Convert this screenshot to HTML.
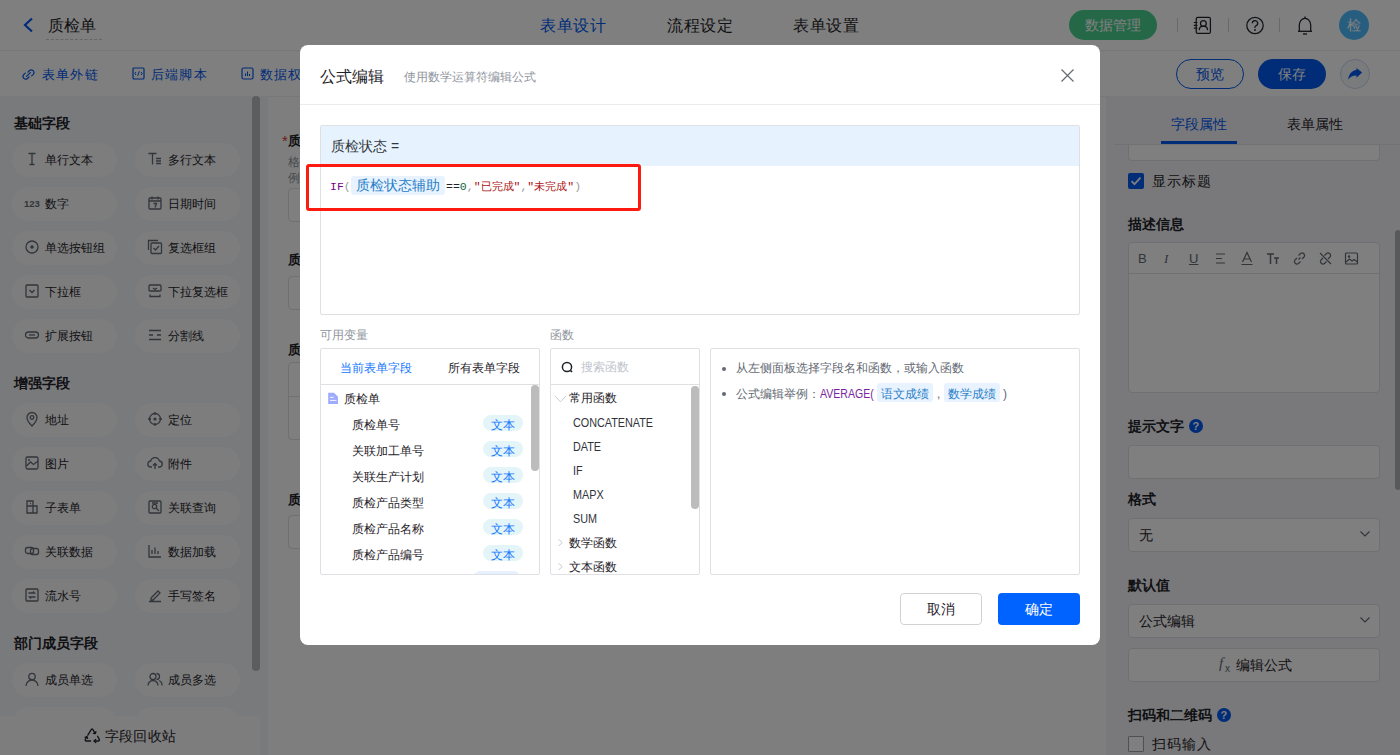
<!DOCTYPE html>
<html><head><meta charset="utf-8">
<style>
*{box-sizing:border-box;margin:0;padding:0}
html,body{width:1400px;height:755px;overflow:hidden;background:#fff;font-family:"Liberation Sans",sans-serif;color:#1f2329}
.a{position:absolute}
.t{position:absolute;white-space:nowrap;line-height:1}
#hdr{left:0;top:0;width:1400px;height:51px;background:#fff;border-bottom:1px solid #eceef1}
#sub{left:0;top:51px;width:1400px;height:45px;background:#fff}
#lp{left:0;top:96px;width:268px;height:659px;background:#f3f4f7}
#cv{left:268px;top:96px;width:838px;height:659px;background:#fcfcfc}
#rp{left:1106px;top:96px;width:294px;height:659px;background:#f2f3f6}
.sec{position:absolute;font-size:14px;font-weight:bold;color:#1f2329;line-height:1;white-space:nowrap}
.pill{position:absolute;width:105px;height:34px;border-radius:17px;background:#fafbfc}
.pill span{position:absolute;left:33px;top:11px;font-size:12px;line-height:12px;color:#1f2329;white-space:nowrap}
.pill svg{position:absolute;left:12px;top:8px}
#mask{left:0;top:0;width:1400px;height:755px;background:rgba(0,0,0,0.5)}
#modal{left:300px;top:45px;width:800px;height:600px;background:#fff;border-radius:8px}
.box{position:absolute;border:1px solid #dee0e3;border-radius:2px;background:#fff}
.tag{position:absolute;height:16px;padding:0 7px;border-radius:8px;background:#e6f4ff;color:#1677ff;font-size:12px;line-height:16px}
.lbl{position:absolute;font-size:13px;font-weight:bold;color:#1f2329;line-height:1;white-space:nowrap}
.inp{position:absolute;left:23px;width:252px;height:34px;border:1px solid #dee0e3;border-radius:4px;background:#fff}
</style></head><body>
<!-- header -->
<div id="hdr" class="a">
  <svg class="a" style="left:22px;top:17px" width="12" height="16" viewBox="0 0 12 16"><path d="M10 1.5 L3 8 L10 14.5" fill="none" stroke="#0058f0" stroke-width="2.2"/></svg>
  <div class="t" style="left:48px;top:18px;font-size:16px;color:#1f2329">质检单</div>
  <div class="a" style="left:46px;top:39px;width:56px;border-top:1px dashed #c9ccd2"></div>
  <div class="t" style="left:540px;top:18px;font-size:16px;color:#0058f0;letter-spacing:0.7px">表单设计</div>
  <div class="t" style="left:667px;top:18px;font-size:16px;color:#1f2329;letter-spacing:0.7px">流程设定</div>
  <div class="t" style="left:793px;top:18px;font-size:16px;color:#1f2329;letter-spacing:0.7px">表单设置</div>
  <div class="a" style="left:1069px;top:10px;width:88px;height:30px;border-radius:15px;background:#4bd08f"></div>
  <div class="t" style="left:1085px;top:18px;font-size:14px;color:#fff">数据管理</div>
  <div class="a" style="left:1177px;top:18px;width:1px;height:14px;background:#d0d3d8"></div>
  <div class="a" style="left:1228px;top:18px;width:1px;height:14px;background:#d0d3d8"></div>
  <div class="a" style="left:1279px;top:18px;width:1px;height:14px;background:#d0d3d8"></div>
  <svg class="a" style="left:1190px;top:14px" width="25" height="22" viewBox="0 0 25 22"><rect x="6.2" y="3.4" width="14.2" height="16" rx="1.5" fill="none" stroke="#1f2329" stroke-width="1.25"/><path d="M3.8 8.5h3.6M3.8 11.3h3.6M3.8 14.1h3.6" stroke="#1f2329" stroke-width="1.2"/><circle cx="13.4" cy="9.4" r="2.9" fill="none" stroke="#1f2329" stroke-width="1.25"/><path d="M9.2 16.2C9.2 13.6 11 12 13.4 12S17.6 13.6 17.6 16.2" fill="none" stroke="#1f2329" stroke-width="1.25"/></svg>
  <svg class="a" style="left:1245px;top:16px" width="20" height="19" viewBox="0 0 20 19"><circle cx="10" cy="9.5" r="8.2" fill="none" stroke="#1f2329" stroke-width="1.25"/><path d="M7.3 7.3a2.7 2.7 0 1 1 3.6 2.5c-.7.3-.9.8-.9 1.6v.6" fill="none" stroke="#1f2329" stroke-width="1.25"/><circle cx="10" cy="14" r=".9" fill="#1f2329"/></svg>
  <svg class="a" style="left:1295px;top:14px" width="20" height="22" viewBox="0 0 20 22"><path d="M10 2.6V4.3" stroke="#1f2329" stroke-width="1.3"/><path d="M4.3 17.3V11A5.7 6.6 0 0 1 15.7 11V17.3" fill="none" stroke="#1f2329" stroke-width="1.25"/><path d="M3 17.3H17" stroke="#1f2329" stroke-width="1.3"/><path d="M8 20H12" stroke="#1f2329" stroke-width="1.3"/></svg>
  <div class="a" style="left:1339px;top:10px;width:30px;height:30px;border-radius:50%;background:#4fbdff"></div>
  <div class="t" style="left:1347px;top:18px;font-size:14px;color:#fff">检</div>
</div>
<div id="sub" class="a">
  <svg class="a" style="left:22px;top:16.5px" width="13" height="13" viewBox="0 0 13 13"><path d="M5.9 4.1L7.5 2.5A2.7 2.7 0 0 1 11.3 6.3L9.7 7.9M7.1 8.9L5.5 10.5A2.7 2.7 0 0 1 1.7 6.7L3.3 5.1M4.6 8.4L8.4 4.6" fill="none" stroke="#0058f0" stroke-width="1.2" stroke-linecap="round"/></svg>
  <div class="t" style="left:42px;top:17px;font-size:13px;color:#0058f0;letter-spacing:1.2px">表单外链</div>
  <svg class="a" style="left:132px;top:16px" width="13" height="13" viewBox="0 0 13 13"><rect x="1" y="1" width="11" height="11" rx="1" fill="none" stroke="#0058f0" stroke-width="1.2"/><path d="M4 5L2.8 6.5 4 8M9 5l1.2 1.5L9 8M7.3 4.2L5.7 8.8" fill="none" stroke="#0058f0" stroke-width="1"/></svg>
  <div class="t" style="left:151px;top:17px;font-size:13px;color:#0058f0;letter-spacing:1.2px">后端脚本</div>
  <svg class="a" style="left:241px;top:16px" width="13" height="13" viewBox="0 0 13 13"><rect x="1" y="1" width="11" height="11" rx="1.5" fill="none" stroke="#0058f0" stroke-width="1.2"/><path d="M4.5 9V6.5M6.5 9V4.5M8.5 9V7" stroke="#0058f0" stroke-width="1.1"/></svg>
  <div class="t" style="left:260px;top:17px;font-size:13px;color:#0058f0;letter-spacing:1.2px">数据权限</div>
  <div class="a" style="left:1176px;top:8px;width:68px;height:30px;border-radius:15px;border:1px solid #0058f0;background:#fff"></div>
  <div class="t" style="left:1196px;top:16px;font-size:14px;color:#0058f0">预览</div>
  <div class="a" style="left:1258px;top:8px;width:68px;height:30px;border-radius:15px;background:#0058f0"></div>
  <div class="t" style="left:1278px;top:16px;font-size:14px;color:#fff">保存</div>
  <div class="a" style="left:1340px;top:8px;width:30px;height:30px;border-radius:50%;border:1px solid #c8d5ee;background:#f5f7fb"></div>
  <svg class="a" style="left:1347px;top:15px" width="17" height="16" viewBox="0 0 17 16"><path d="M9.5 1.9L15.1 6.6L9.5 11.8V9.6C5.8 9.5 3.3 10.8 1.2 13.8C1.6 8.2 4.6 4.6 9.5 4Z" fill="#0058f0"/></svg>
</div>
<div id="lp" class="a"><div class="sec" style="left:14px;top:20px">基础字段</div><div class="pill" style="left:12px;top:47px"><svg width="16" height="16" viewBox="0 0 16 16"><path d="M4.5 2.5h7M8 2.5v11M5.5 13.5h5" stroke="#646a73" fill="none" stroke-width="1.3"/></svg><span>单行文本</span></div><div class="pill" style="left:135px;top:47px"><svg width="16" height="16" viewBox="0 0 16 16"><path d="M1.5 2.5h8M5.5 2.5v11M9 7.5h5M9 10h5M9 12.5h5" stroke="#646a73" fill="none" stroke-width="1.3"/></svg><span>多行文本</span></div><div class="pill" style="left:12px;top:91px"><svg width="18" height="16" viewBox="0 0 18 16"><text x="0" y="11.5" font-family="Liberation Sans" font-weight="bold" font-size="9.5" fill="#646a73">123</text></svg><span>数字</span></div><div class="pill" style="left:135px;top:91px"><svg width="16" height="16" viewBox="0 0 16 16"><rect x="2" y="3" width="12" height="11" rx="1" stroke="#646a73" fill="none" stroke-width="1.3"/><path d="M2 6h12M5 1.5v3M11 1.5v3M6.5 8.5h3l-1.5 4" stroke="#646a73" fill="none" stroke-width="1.3"/></svg><span>日期时间</span></div><div class="pill" style="left:12px;top:135px"><svg width="16" height="16" viewBox="0 0 16 16"><circle cx="8" cy="8" r="6" stroke="#646a73" fill="none" stroke-width="1.3"/><circle cx="8" cy="8" r="1.8" fill="#646a73"/></svg><span>单选按钮组</span></div><div class="pill" style="left:135px;top:135px"><svg width="16" height="16" viewBox="0 0 16 16"><path d="M1.5 11V1.5H11" stroke="#646a73" fill="none" stroke-width="1.3"/><rect x="4" y="4" width="10.5" height="10.5" rx="1" stroke="#646a73" fill="none" stroke-width="1.3"/><path d="M6.5 9l2 2 3.5-4" stroke="#646a73" fill="none" stroke-width="1.3"/></svg><span>复选框组</span></div><div class="pill" style="left:12px;top:179px"><svg width="16" height="16" viewBox="0 0 16 16"><rect x="2" y="2" width="12" height="12" rx="1" stroke="#646a73" fill="none" stroke-width="1.3"/><path d="M5.5 7l2.5 2.5L10.5 7" stroke="#646a73" fill="none" stroke-width="1.3"/></svg><span>下拉框</span></div><div class="pill" style="left:135px;top:179px"><svg width="16" height="16" viewBox="0 0 16 16"><rect x="2" y="2" width="12" height="6" rx="1" stroke="#646a73" fill="none" stroke-width="1.3"/><path d="M3 11.5v2h10v-2M6 5l2 1.5L10 5" stroke="#646a73" fill="none" stroke-width="1.3"/></svg><span>下拉复选框</span></div><div class="pill" style="left:12px;top:223px"><svg width="16" height="16" viewBox="0 0 16 16"><rect x="1.5" y="5" width="13" height="6" rx="3" stroke="#646a73" fill="none" stroke-width="1.3"/><path d="M5 8h6" stroke="#646a73" fill="none" stroke-width="1.3"/></svg><span>扩展按钮</span></div><div class="pill" style="left:135px;top:223px"><svg width="16" height="16" viewBox="0 0 16 16"><path d="M2 3.5h12M2 8h4M10 8h4M2 12.5h12" stroke="#646a73" fill="none" stroke-width="1.3"/></svg><span>分割线</span></div><div class="sec" style="left:14px;top:280px">增强字段</div><div class="pill" style="left:12px;top:307px"><svg width="16" height="16" viewBox="0 0 16 16"><path d="M8 15s-5-5-5-8.5a5 5 0 0 1 10 0C13 10 8 15 8 15z" stroke="#646a73" fill="none" stroke-width="1.3"/><circle cx="8" cy="6.5" r="1.8" stroke="#646a73" fill="none" stroke-width="1.3"/></svg><span>地址</span></div><div class="pill" style="left:135px;top:307px"><svg width="16" height="16" viewBox="0 0 16 16"><circle cx="8" cy="8" r="5.5" stroke="#646a73" fill="none" stroke-width="1.3"/><circle cx="8" cy="8" r="1.6" fill="#646a73"/><path d="M8 1v3M8 12v3M1 8h3M12 8h3" stroke="#646a73" fill="none" stroke-width="1.3"/></svg><span>定位</span></div><div class="pill" style="left:12px;top:351px"><svg width="16" height="16" viewBox="0 0 16 16"><rect x="2" y="2" width="12" height="12" rx="1.5" stroke="#646a73" fill="none" stroke-width="1.3"/><path d="M2.5 11l4-4 3 2.5L14 6" stroke="#646a73" fill="none" stroke-width="1.3"/><circle cx="5" cy="5" r="1" fill="#646a73"/></svg><span>图片</span></div><div class="pill" style="left:135px;top:351px"><svg width="16" height="16" viewBox="0 0 16 16"><path d="M5 12H4a3 3 0 0 1-.3-6A4.5 4.5 0 0 1 12.4 6 3 3 0 0 1 12 12h-1" stroke="#646a73" fill="none" stroke-width="1.3"/><path d="M8 14V8.5M6 10.5l2-2 2 2" stroke="#646a73" fill="none" stroke-width="1.3"/></svg><span>附件</span></div><div class="pill" style="left:12px;top:395px"><svg width="16" height="16" viewBox="0 0 16 16"><path d="M3 2h6v12H3zM3 7h10v7H9" stroke="#646a73" fill="none" stroke-width="1.3"/><path d="M6 4.5h1" stroke="#646a73" fill="none" stroke-width="1.3"/></svg><span>子表单</span></div><div class="pill" style="left:135px;top:395px"><svg width="16" height="16" viewBox="0 0 16 16"><rect x="2" y="2" width="12" height="12" rx="1" stroke="#646a73" fill="none" stroke-width="1.3"/><circle cx="7.5" cy="7.5" r="2.2" stroke="#646a73" fill="none" stroke-width="1.3"/><path d="M9 9l3 3M5 4h6" stroke="#646a73" fill="none" stroke-width="1.3"/></svg><span>关联查询</span></div><div class="pill" style="left:12px;top:439px"><svg width="16" height="16" viewBox="0 0 16 16"><rect x="1.5" y="4.5" width="8" height="6" rx="2" stroke="#646a73" fill="none" stroke-width="1.3"/><rect x="6.5" y="5.5" width="8" height="6" rx="2" stroke="#646a73" fill="none" stroke-width="1.3"/></svg><span>关联数据</span></div><div class="pill" style="left:135px;top:439px"><svg width="16" height="16" viewBox="0 0 16 16"><path d="M2 2v12h12M5 11V7M8 11V4.5M11 11V8" stroke="#646a73" fill="none" stroke-width="1.3"/></svg><span>数据加载</span></div><div class="pill" style="left:12px;top:483px"><svg width="16" height="16" viewBox="0 0 16 16"><rect x="2" y="2" width="12" height="12" rx="1" stroke="#646a73" fill="none" stroke-width="1.3"/><path d="M4.5 6h6l-1.5-1.5M11.5 10h-6l1.5 1.5" stroke="#646a73" fill="none" stroke-width="1.3"/></svg><span>流水号</span></div><div class="pill" style="left:135px;top:483px"><svg width="16" height="16" viewBox="0 0 16 16"><path d="M4 11l7-7 2 2-7 7H4zM2 14.5h12" stroke="#646a73" fill="none" stroke-width="1.3"/></svg><span>手写签名</span></div><div class="sec" style="left:14px;top:540px">部门成员字段</div><div class="pill" style="left:12px;top:567px"><svg width="16" height="16" viewBox="0 0 16 16"><circle cx="8" cy="5.5" r="3.2" stroke="#646a73" fill="none" stroke-width="1.3"/><path d="M2 15a6 6 0 0 1 12 0" stroke="#646a73" fill="none" stroke-width="1.3"/></svg><span>成员单选</span></div><div class="pill" style="left:135px;top:567px"><svg width="16" height="16" viewBox="0 0 16 16"><circle cx="6" cy="5.5" r="3" stroke="#646a73" fill="none" stroke-width="1.3"/><path d="M1 14.5a5 5 0 0 1 10 0M9.5 2.5a3 3 0 0 1 0 6M12 9.5a5 5 0 0 1 3 5" stroke="#646a73" fill="none" stroke-width="1.3"/></svg><span>成员多选</span></div><div class="pill" style="left:12px;top:611px"><svg width="16" height="16" viewBox="0 0 16 16"><circle cx="8" cy="5.5" r="3.2" stroke="#646a73" fill="none" stroke-width="1.3"/><path d="M2 15a6 6 0 0 1 12 0" stroke="#646a73" fill="none" stroke-width="1.3"/></svg><span>部门单选</span></div><div class="pill" style="left:135px;top:611px"><svg width="16" height="16" viewBox="0 0 16 16"><circle cx="6" cy="5.5" r="3" stroke="#646a73" fill="none" stroke-width="1.3"/><path d="M1 14.5a5 5 0 0 1 10 0M9.5 2.5a3 3 0 0 1 0 6M12 9.5a5 5 0 0 1 3 5" stroke="#646a73" fill="none" stroke-width="1.3"/></svg><span>部门多选</span></div><div class="a" style="left:252px;top:0;width:8px;height:575px;border-radius:4px;background:#b9bbbe"></div><div class="a" style="left:0;top:620px;width:260px;height:39px;background:#fafafa;border-top:0px solid #eceef1"></div><svg class="a" style="left:84px;top:632px" width="17" height="16" viewBox="0 0 17 16"><g fill="none" stroke="#1f2329" stroke-width="1.3" stroke-linejoin="round" stroke-linecap="round"><path d="M3.8 7.2L7.6 1.2Q8.1 0.5 8.6 1.2L11.2 5.3"/><path d="M9.4 5.3L11.3 5.6L11.9 3.7"/><path d="M13.6 8.3L15.3 11.4Q15.7 12.9 14.2 13H10.2"/><path d="M11.8 11.4L10.1 13L11.8 14.6"/><path d="M6.6 13H2.4Q0.9 12.9 1.3 11.4L2.8 8.7"/><path d="M1.2 9.4L2.9 8.6L3.7 10.4"/></g></svg><div class="t" style="left:105px;top:633px;font-size:14px;color:#1f2329;letter-spacing:0.2px">字段回收站</div></div>
<div id="cv" class="a"><div class="a" style="left:0;top:0;width:838px;height:1px;background:#f0f1f3"></div><div class="t" style="left:14px;top:36.5px;font-size:15px;color:#d83931">*</div>
<div class="lbl" style="left:20px;top:38px">质检状态</div>
<div class="t" style="left:20px;top:60px;font-size:12px;color:#8f959e">格式说明</div>
<div class="t" style="left:20px;top:76px;font-size:12px;color:#8f959e">例如</div>
<div class="a" style="left:20px;top:92px;width:500px;height:34px;border:1px solid #dee0e3;border-radius:4px;background:#fff"></div>
<div class="lbl" style="left:20px;top:157px">质检结果</div>
<div class="a" style="left:20px;top:180px;width:500px;height:34px;border:1px solid #dee0e3;border-radius:4px;background:#fff"></div>
<div class="lbl" style="left:20px;top:247px">质检明细</div>
<div class="a" style="left:20px;top:266px;width:500px;height:78px;border:1px solid #dee0e3;border-radius:4px;background:#fff"></div>
<div class="a" style="left:20px;top:300px;width:500px;border-top:1px solid #dee0e3"></div>
<div class="lbl" style="left:20px;top:397px">质检日期</div>
<div class="a" style="left:20px;top:419px;width:500px;height:34px;border:1px solid #dee0e3;border-radius:4px;background:#fff"></div>
</div>
<div id="rp" class="a"><div class="a" style="left:22px;top:36px;width:252px;height:29px;border:1px solid #dee0e3;border-top:none;border-radius:0 0 4px 4px;background:#fff"></div>
<div class="a" style="left:0;top:0;width:294px;height:48px;background:#f2f3f6"></div><div class="t" style="left:65px;top:21px;font-size:14px;color:#0058f0">字段属性</div>
<div class="t" style="left:181px;top:21px;font-size:14px;color:#1f2329">表单属性</div>
<div class="a" style="left:8px;top:48px;width:286px;border-top:1px solid #e3e5e8"></div>
<div class="a" style="left:55px;top:45px;width:76px;height:3px;background:#0058f0"></div>
<div class="a" style="left:22px;top:77px;width:16px;height:16px;border-radius:2px;background:#0058f0"></div>
<svg class="a" style="left:22px;top:77px" width="16" height="16" viewBox="0 0 16 16"><path d="M3.5 8.2l3 3 6-6.5" fill="none" stroke="#fff" stroke-width="1.8"/></svg>
<div class="t" style="left:46px;top:78px;font-size:14px;color:#1f2329;letter-spacing:0.9px">显示标题</div>
<div class="lbl" style="left:22px;top:121px;font-size:14px">描述信息</div>
<div class="a" style="left:22px;top:146px;width:252px;height:151px;border:1px solid #dee0e3;border-radius:4px;background:#fff"></div>
<div class="a" style="left:22px;top:177px;width:252px;border-top:1px solid #dee0e3"></div>
<div class="t" style="left:32px;top:156px;font-size:13px;color:#646a73">B</div>
<div class="t" style="left:58px;top:156px;font-size:13px;color:#646a73;font-style:italic;font-family:'Liberation Serif'">I</div>
<div class="t" style="left:83px;top:156px;font-size:13px;color:#646a73;text-decoration:underline">U</div>
<svg class="a" style="left:108px;top:156px" width="14" height="13" viewBox="0 0 14 13"><path d="M2 2h9M2 6.5h6M2 11h9" stroke="#646a73" stroke-width="1.2"/></svg>
<svg class="a" style="left:134px;top:155px" width="14" height="15" viewBox="0 0 14 15"><path d="M2.5 11L7 1.5 11.5 11M4 8h6M1.5 13.5h11" fill="none" stroke="#646a73" stroke-width="1.2"/></svg>
<svg class="a" style="left:160px;top:156px" width="14" height="13" viewBox="0 0 14 13"><path d="M1 2h7M4.5 2v10M8 6h5M10.5 6v6" fill="none" stroke="#646a73" stroke-width="1.5"/></svg>
<svg class="a" style="left:186px;top:155px" width="15" height="15" viewBox="0 0 15 15"><path d="M6.5 8.5l2-2M5 7l-2 2a2.5 2.5 0 0 0 3.5 3.5l2-2M10 8l2-2a2.5 2.5 0 0 0-3.5-3.5l-2 2" fill="none" stroke="#646a73" stroke-width="1.2"/></svg>
<svg class="a" style="left:212px;top:155px" width="15" height="15" viewBox="0 0 15 15"><path d="M5 7l-2 2a2.5 2.5 0 0 0 3.5 3.5l2-2M10 8l2-2a2.5 2.5 0 0 0-3.5-3.5l-2 2M2 2l11 11" fill="none" stroke="#646a73" stroke-width="1.2"/></svg>
<svg class="a" style="left:238px;top:155px" width="15" height="15" viewBox="0 0 15 15"><rect x="1.5" y="2" width="12" height="11" rx="1" fill="none" stroke="#646a73" stroke-width="1.2"/><circle cx="5" cy="5.5" r="1.2" fill="#646a73"/><path d="M2 11l3.5-3 2.5 2 2-1.5 3.5 2.5" fill="none" stroke="#646a73" stroke-width="1.2"/></svg>
<div class="lbl" style="left:22px;top:323px;font-size:14px">提示文字</div>
<div class="a" style="left:83px;top:323px;width:14px;height:14px;border-radius:50%;background:#0058f0"></div>
<div class="t" style="left:86.5px;top:324.5px;font-size:11px;font-weight:bold;color:#fff">?</div>
<div class="a" style="left:22px;top:349px;width:252px;height:34px;border:1px solid #dee0e3;border-radius:4px;background:#fff"></div>
<div class="lbl" style="left:22px;top:396px;font-size:14px">格式</div>
<div class="a" style="left:22px;top:422px;width:252px;height:34px;border:1px solid #dee0e3;border-radius:4px;background:#fff"></div>
<div class="t" style="left:33px;top:432px;font-size:14px;color:#1f2329">无</div>
<svg class="a" style="left:253px;top:434px" width="12" height="8" viewBox="0 0 12 8"><path d="M1.5 1.5L6 6l4.5-4.5" fill="none" stroke="#646a73" stroke-width="1.2"/></svg>
<div class="lbl" style="left:22px;top:482px;font-size:14px">默认值</div>
<div class="a" style="left:22px;top:508px;width:252px;height:34px;border:1px solid #dee0e3;border-radius:4px;background:#fff"></div>
<div class="t" style="left:33px;top:518px;font-size:14px;color:#1f2329">公式编辑</div>
<svg class="a" style="left:253px;top:520px" width="12" height="8" viewBox="0 0 12 8"><path d="M1.5 1.5L6 6l4.5-4.5" fill="none" stroke="#646a73" stroke-width="1.2"/></svg>
<div class="a" style="left:22px;top:552px;width:252px;height:34px;border:1px solid #dee0e3;border-radius:4px;background:#fff"></div>
<div class="t" style="left:113px;top:560px;font-size:15px;color:#646a73;font-family:'Liberation Serif';font-style:italic">f</div><div class="t" style="left:119px;top:568px;font-size:10px;color:#646a73">x</div>
<div class="t" style="left:130px;top:562px;font-size:14px;color:#1f2329">编辑公式</div>
<div class="lbl" style="left:22px;top:612px;font-size:14px">扫码和二维码</div>
<div class="a" style="left:111px;top:612px;width:14px;height:14px;border-radius:50%;background:#0058f0"></div>
<div class="t" style="left:114.5px;top:613.5px;font-size:11px;font-weight:bold;color:#fff">?</div>
<div class="a" style="left:22px;top:640px;width:16px;height:16px;border:1px solid #9ca1a9;border-radius:1px;background:#fff"></div>
<div class="t" style="left:46px;top:641px;font-size:14px;color:#1f2329;letter-spacing:0.9px">扫码输入</div>
<div class="a" style="left:289px;top:134px;width:6px;height:260px;border-radius:3px;background:#b0b2b5"></div>
</div>
<div id="mask" class="a"></div>
<div id="modal" class="a">
  <div class="t" style="left:20px;top:24px;font-size:16px;color:#1f2329">公式编辑</div>
  <div class="t" style="left:104px;top:26px;font-size:12px;color:#8f959e">使用数学运算符编辑公式</div>
  <svg class="a" style="left:761px;top:24px" width="13" height="13" viewBox="0 0 13 13"><path d="M0.5 0.5l12 12M12.5 0.5l-12 12" stroke="#646a73" stroke-width="1.2"/></svg>
  <div class="a" style="left:0;top:59px;width:800px;border-top:1px solid #e9ebef"></div>
  <!-- editor -->
  <div class="a" style="left:20px;top:80px;width:760px;height:190px;border:1px solid #dee0e3;border-radius:2px;background:#fff;overflow:hidden">
    <div class="a" style="left:0;top:0;width:758px;height:40px;background:#e6f3fe"></div>
    <div class="t" style="left:10px;top:13px;font-size:14px;color:#33373d">质检状态 =</div>
    <div class="a" style="left:30px;top:50px;width:94px;height:19px;border-radius:3px;background:#e8f3ff"></div>
    <div class="t" style="left:35px;top:52px;font-size:14px;color:#2a80c8">质检状态辅助</div>
    <div class="t" style="left:9px;top:55px;font-family:'Liberation Mono',monospace;font-size:11.5px;color:#770088">IF<span style="color:#999">(</span></div>
    <div class="t" style="left:125px;top:55px;font-family:'Liberation Mono',monospace;font-size:11.5px;color:#1f2329">==<span style="color:#116644">0</span><span style="color:#999">,</span><span style="color:#aa1111">"<span style="font-size:11px">已完成</span>"</span><span style="color:#999">,</span><span style="color:#aa1111">"<span style="font-size:11px">未完成</span>"</span><span style="color:#999">)</span></div>
  </div>
  <!-- labels -->
  <div class="t" style="left:20px;top:284px;font-size:12px;color:#8f959e">可用变量</div>
  <div class="t" style="left:250px;top:284px;font-size:12px;color:#8f959e">函数</div>
  <!-- variables box -->
  <div class="a" style="left:20px;top:303px;width:220px;height:227px;border:1px solid #dee0e3;border-radius:2px;background:#fff;overflow:hidden">
    <div class="t" style="left:19px;top:13px;font-size:12px;color:#1677ff">当前表单字段</div>
    <div class="t" style="left:127px;top:13px;font-size:12px;color:#1f2329">所有表单字段</div>
    <div class="a" style="left:0;top:35px;width:218px;border-top:1px solid #dee0e3"></div>
    <svg class="a" style="left:7px;top:43px" width="11" height="12" viewBox="0 0 11 12"><path d="M0.2 0.7H6L10 4.7V12H0.2Z" fill="#9eacff"/><path d="M2 5.3H5.8M2 8.4H8.5" stroke="#fff" stroke-width="0.9"/></svg>
    <div class="t" style="left:23px;top:43.5px;font-size:12px;color:#1f2329">质检单</div>
    <div class="t" style="left:31px;top:69.5px;font-size:12px;color:#1f2329">质检单号</div><div class="a" style="left:162px;top:66.0px;width:40px;height:16px;border-radius:8px;background:#e4f5f9"></div><div class="t" style="left:170px;top:69.5px;font-size:12px;color:#1677ff">文本</div><div class="t" style="left:31px;top:95.5px;font-size:12px;color:#1f2329">关联加工单号</div><div class="a" style="left:162px;top:92.0px;width:40px;height:16px;border-radius:8px;background:#e4f5f9"></div><div class="t" style="left:170px;top:95.5px;font-size:12px;color:#1677ff">文本</div><div class="t" style="left:31px;top:121.5px;font-size:12px;color:#1f2329">关联生产计划</div><div class="a" style="left:162px;top:118.0px;width:40px;height:16px;border-radius:8px;background:#e4f5f9"></div><div class="t" style="left:170px;top:121.5px;font-size:12px;color:#1677ff">文本</div><div class="t" style="left:31px;top:147.5px;font-size:12px;color:#1f2329">质检产品类型</div><div class="a" style="left:162px;top:144.0px;width:40px;height:16px;border-radius:8px;background:#e4f5f9"></div><div class="t" style="left:170px;top:147.5px;font-size:12px;color:#1677ff">文本</div><div class="t" style="left:31px;top:173.5px;font-size:12px;color:#1f2329">质检产品名称</div><div class="a" style="left:162px;top:170.0px;width:40px;height:16px;border-radius:8px;background:#e4f5f9"></div><div class="t" style="left:170px;top:173.5px;font-size:12px;color:#1677ff">文本</div><div class="t" style="left:31px;top:199.5px;font-size:12px;color:#1f2329">质检产品编号</div><div class="a" style="left:162px;top:196.0px;width:40px;height:16px;border-radius:8px;background:#e4f5f9"></div><div class="t" style="left:170px;top:199.5px;font-size:12px;color:#1677ff">文本</div>
    <div class="a" style="left:152px;top:222px;width:48px;height:16px;border-radius:8px;background:#e6f0ff"></div>
    <div class="a" style="left:210px;top:36px;width:8px;height:86px;border-radius:4px;background:#bcbcbc"></div>
  </div>
  <!-- functions box -->
  <div class="a" style="left:250px;top:303px;width:150px;height:227px;border:1px solid #dee0e3;border-radius:2px;background:#fff;overflow:hidden">
    <svg class="a" style="left:10px;top:12px" width="13" height="13" viewBox="0 0 13 13"><circle cx="6" cy="6" r="4.6" fill="none" stroke="#1f2329" stroke-width="1.5"/><path d="M9.4 9.4l1.6 1.6" stroke="#1f2329" stroke-width="1.6"/></svg>
    <div class="t" style="left:30px;top:12px;font-size:12px;color:#c0c4cc">搜索函数</div>
    <div class="a" style="left:0;top:35px;width:148px;border-top:1px solid #dee0e3"></div>
    <svg class="a" style="left:3px;top:46px" width="13" height="8" viewBox="0 0 13 8"><path d="M0.8 0.8l5.7 6 5.7-6" fill="none" stroke="#c9ccd2" stroke-width="1"/></svg>
    <div class="t" style="left:18px;top:43px;font-size:12px;color:#1f2329">常用函数</div>
    <div class="t" style="left:22px;top:68px;font-size:12px;color:#30343a;transform:scaleX(0.9);transform-origin:0 0">CONCATENATE</div>
    <div class="t" style="left:22px;top:92px;font-size:12px;color:#30343a;transform:scaleX(0.9);transform-origin:0 0">DATE</div>
    <div class="t" style="left:22px;top:116px;font-size:12px;color:#30343a;transform:scaleX(0.9);transform-origin:0 0">IF</div>
    <div class="t" style="left:22px;top:140px;font-size:12px;color:#30343a;transform:scaleX(0.9);transform-origin:0 0">MAPX</div>
    <div class="t" style="left:22px;top:164px;font-size:12px;color:#30343a;transform:scaleX(0.9);transform-origin:0 0">SUM</div>
    <svg class="a" style="left:7px;top:189px" width="6" height="10" viewBox="0 0 6 10"><path d="M0.7 1.2l3.4 3.4-3.4 3.4" fill="none" stroke="#c0c4cc" stroke-width="1"/></svg>
    <div class="t" style="left:18px;top:187.5px;font-size:12px;color:#1f2329">数学函数</div>
    <svg class="a" style="left:7px;top:213px" width="6" height="10" viewBox="0 0 6 10"><path d="M0.7 1.2l3.4 3.4-3.4 3.4" fill="none" stroke="#c0c4cc" stroke-width="1"/></svg>
    <div class="t" style="left:18px;top:211.5px;font-size:12px;color:#1f2329">文本函数</div>
    <div class="a" style="left:140px;top:37px;width:8px;height:123px;border-radius:4px;background:#bcbcbc"></div>
  </div>
  <!-- desc box -->
  <div class="a" style="left:410px;top:303px;width:370px;height:227px;border:1px solid #dee0e3;border-radius:2px;background:#fff">
    <div class="a" style="left:11px;top:18px;width:4px;height:4px;border-radius:50%;background:#646a73"></div>
    <div class="t" style="left:25px;top:13px;font-size:12px;color:#646a73">从左侧面板选择字段名和函数，或输入函数</div>
    <div class="a" style="left:11px;top:43px;width:4px;height:4px;border-radius:50%;background:#646a73"></div>
    <div class="t" style="left:25px;top:39px;font-size:12px;color:#646a73">公式编辑举例：<span style="color:#7a1f9e;display:inline-block;transform:scaleX(0.88);transform-origin:0 0">AVERAGE(</span></div>
    <div class="a" style="left:166px;top:34px;width:56px;height:19px;border-radius:3px;background:#e8f3ff"></div>
    <div class="t" style="left:170px;top:39px;font-size:12px;color:#2a80c8">语文成绩</div>
    <div class="t" style="left:226px;top:39px;font-size:12px;color:#646a73">,</div>
    <div class="a" style="left:233px;top:34px;width:56px;height:19px;border-radius:3px;background:#e8f3ff"></div>
    <div class="t" style="left:237px;top:39px;font-size:12px;color:#2a80c8">数学成绩</div>
    <div class="t" style="left:292px;top:39px;font-size:12px;color:#646a73">)</div>
  </div>
  <!-- buttons -->
  <div class="a" style="left:600px;top:548px;width:82px;height:32px;border:1px solid #d0d3d6;border-radius:4px;background:#fff"></div>
  <div class="t" style="left:627px;top:557px;font-size:14px;color:#1f2329">取消</div>
  <div class="a" style="left:698px;top:548px;width:82px;height:32px;border-radius:4px;background:#0062ff"></div>
  <div class="t" style="left:725px;top:557px;font-size:14px;color:#fff">确定</div>
</div>
<div class="a" style="left:306px;top:164px;width:335px;height:47px;border:3px solid #ff1a10;border-radius:3px"></div>
</body></html>
